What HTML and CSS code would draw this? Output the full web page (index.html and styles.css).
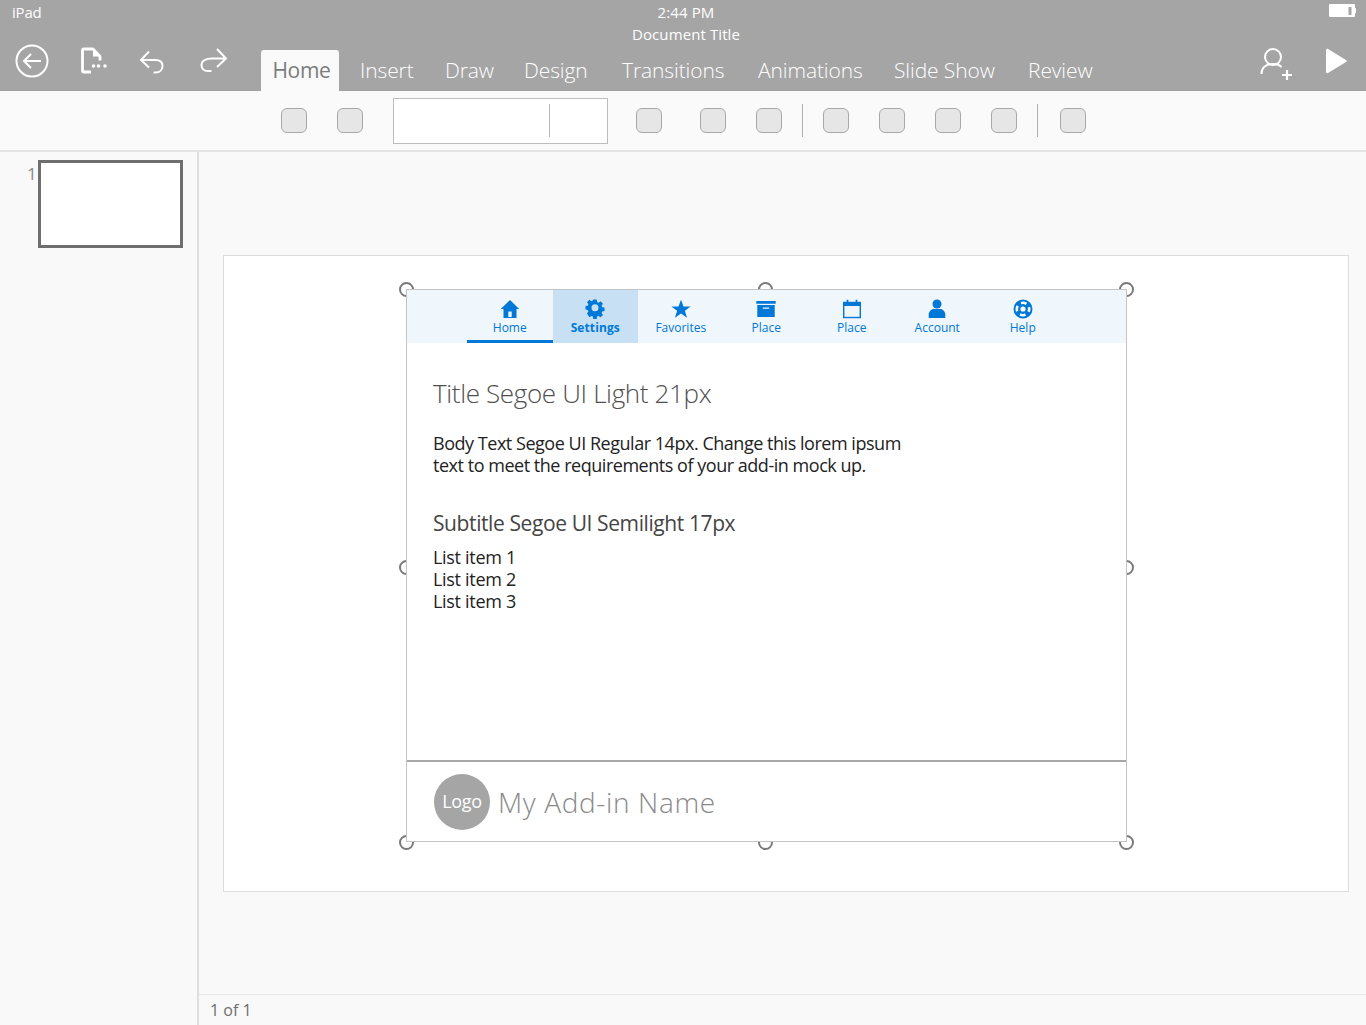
FILE: index.html
```html
<!DOCTYPE html>
<html lang="en">
<head>
<meta charset="utf-8">
<title>Document Title</title>
<link rel="stylesheet" href="styles.css">
</head>
<body>
<header class="appbar">
  <div class="status">
    <span class="status-device">iPad</span>
    <div class="status-center">
      <span>2:44 PM</span>
      <span>Document Title</span>
    </div>
    <svg class="battery" width="28" height="14" viewBox="0 0 28 14"><rect x="1" y="1" width="26" height="13" rx="1" fill="#fff"/><rect x="20.500" y="4" width="3" height="8" fill="#a5a5a5"/><rect x="27" y="5" width="1" height="5" fill="#fff"/></svg>
  </div>
  <div class="commandrow">
    <div class="quick">
      <svg class="q-back" width="34" height="34" viewBox="0 0 34 34" fill="none" stroke="#fff" stroke-width="2"><circle cx="17" cy="17" r="15.500"/><path d="M26 17H9.500M16 10l-7 7 7 7"/></svg>
      <svg class="q-file" width="30" height="28" viewBox="0 0 30 28" fill="none"><path d="M2.500 3.500c0-1 .5-1.500 1.500-1.500h9l7 7.500v4M2.500 3.500v20c0 1 .5 1.500 1.500 1.500h7" stroke="#fff" stroke-width="2.800" stroke-linejoin="round"/><path d="M13 2v7.500h7z" fill="#fff"/><circle cx="13.500" cy="19" r="1.800" fill="#fff"/><circle cx="18.500" cy="19" r="1.800" fill="#fff"/><circle cx="25" cy="19" r="1.800" fill="#fff"/></svg>
      <svg class="q-undo" width="26" height="26" viewBox="0 0 26 26" fill="none" stroke="#fff" stroke-width="2"><path d="M10 2.500L2 11l8 7.500M2 11h14.500c4.500 0 7 2.500 7 6s-2.500 6.500-7 6.500h-2"/></svg>
      <svg class="q-redo" width="28" height="26" viewBox="0 0 28 26" fill="none" stroke="#fff" stroke-width="2"><path d="M17 2l9 9.500L17 20M26 11.500H12C5.500 11.500 1.500 14 1.500 18s3 6 6 6h4"/></svg>
    </div>
    <nav class="ribbon-tabs">
      <a class="ribbon-tab ribbon-tab-active">Home</a>
      <a class="ribbon-tab">Insert</a>
      <a class="ribbon-tab">Draw</a>
      <a class="ribbon-tab">Design</a>
      <a class="ribbon-tab">Transitions</a>
      <a class="ribbon-tab">Animations</a>
      <a class="ribbon-tab">Slide Show</a>
      <a class="ribbon-tab">Review</a>
    </nav>
    <div class="share">
      <svg width="34" height="34" viewBox="0 0 34 34" fill="none" stroke="#fff" stroke-width="2"><circle cx="13" cy="10" r="8"/><path d="M1.500 27c0-6 4-10 11.500-10 3.500 0 6.500 1 8.500 3"/><path d="M27 23v10M22 28h10" stroke-width="2.200"/></svg>
      <svg width="22" height="26" viewBox="0 0 22 26"><path d="M1 2.500C1 1 2 .5 3 1l18 11c1 .6 1 1.400 0 2L3 25c-1 .5-2 0-2-1.500z" fill="#fff"/></svg>
    </div>
  </div>
</header>

<div class="toolbar">
  <span class="tool"></span>
  <span class="tool tool-gap-30"></span>
  <div class="font-box"><span class="font-name"></span><span class="font-size"></span></div>
  <span class="tool tool-gap-28"></span>
  <span class="tool tool-gap-38"></span>
  <span class="tool tool-gap-30"></span>
  <span class="tool-sep tool-sep-a"></span>
  <span class="tool tool-gap-20"></span>
  <span class="tool tool-gap-30"></span>
  <span class="tool tool-gap-30"></span>
  <span class="tool tool-gap-30"></span>
  <span class="tool-sep tool-sep-b"></span>
  <span class="tool tool-gap-22"></span>
</div>

<div class="workspace">
  <aside class="thumbs">
    <span class="thumb-num">1</span>
    <div class="thumb"></div>
  </aside>
  <main class="editor">
    <div class="canvas">
      <section class="slide">
        <div class="addin-frame">
          <span class="handle handle-tl"></span>
          <span class="handle handle-tc"></span>
          <span class="handle handle-tr"></span>
          <span class="handle handle-ml"></span>
          <span class="handle handle-mr"></span>
          <span class="handle handle-bl"></span>
          <span class="handle handle-bc"></span>
          <span class="handle handle-br"></span>
          <div class="addin">
            <nav class="pivot">
              <a class="pivot-item pivot-item-first">
                <svg width="20" height="20" viewBox="0 0 20 20"><path fill="#0078d7" fill-rule="evenodd" d="M10 1 .8 10H3.500v9h13v-9h2.700zM8.300 12.500h3.400V18H8.300z"/></svg>
                <span>Home</span>
              </a>
              <a class="pivot-item pivot-item-active">
                <svg width="20" height="20" viewBox="0 0 20 20"><path fill="#0078d7" fill-rule="evenodd" d="M8.300 .6h3.400l.4 2.500 1.500.6 2-1.400 2.400 2.400-1.400 2 .6 1.500 2.300.4v3.400l-2.300.4-.6 1.500 1.400 2-2.400 2.400-2-1.400-1.500.6-.4 2.400H8.300l-.4-2.400-1.500-.6-2 1.400L2 14.400l1.400-2-.6-1.500-2.300-.4V7.100l2.300-.4.600-1.500-1.400-2 2.400-2.400 2 1.400 1.500-.6zM10 5.300a3.500 3.500 0 1 0 0 7 3.500 3.500 0 0 0 0-7z"/></svg>
                <span>Settings</span>
              </a>
              <a class="pivot-item">
                <svg width="20" height="20" viewBox="0 0 20 20"><path fill="#0078d7" d="M10 .8l2.500 6.700h7.100l-5.700 4.300 2.100 6.900L10 14.500l-6 4.200 2.100-6.900L.4 7.500h7.100z"/></svg>
                <span>Favorites</span>
              </a>
              <a class="pivot-item">
                <svg width="20" height="20" viewBox="0 0 20 20"><path fill="#0078d7" fill-rule="evenodd" d="M.3 2h19.400v2.800H.3zM1.300 6h17.400v12H1.300zM6.800 8.500v1.200h6.400V8.500z"/></svg>
                <span>Place</span>
              </a>
              <a class="pivot-item">
                <svg width="20" height="20" viewBox="0 0 20 20" fill="none" stroke="#0078d7" stroke-width="1.400"><rect x="1.700" y="3.500" width="16.600" height="15"/><path d="M1.700 5.500h16.600" stroke-width="3"/><path d="M5.500 .8v3.500M14.500 .8v3.500" stroke-width="1.700"/></svg>
                <span>Place</span>
              </a>
              <a class="pivot-item">
                <svg width="20" height="20" viewBox="0 0 20 20"><circle cx="10" cy="5" r="4.500" fill="#0078d7"/><path fill="#0078d7" d="M1.700 19v-3.500c0-3 2.500-5.500 5-5.500h6.600c2.500 0 5 2.500 5 5.500V19z"/></svg>
                <span>Account</span>
              </a>
              <a class="pivot-item">
                <svg width="20" height="20" viewBox="0 0 20 20" fill="none"><circle cx="10" cy="10" r="9.500" fill="#0078d7"/><circle cx="10" cy="10" r="2.600" fill="#fff"/><circle cx="10" cy="10" r="6.200" stroke="#fff" stroke-width="2.600" stroke-dasharray="5.700 4.040" stroke-dashoffset="2.850"/></svg>
                <span>Help</span>
              </a>
            </nav>
            <div class="addin-body">
              <h1 class="addin-title">Title Segoe UI Light 21px</h1>
              <p class="addin-text">Body Text Segoe UI Regular 14px. Change this lorem ipsum<br>text to meet the requirements of your add-in mock up.</p>
              <h2 class="addin-subtitle">Subtitle Segoe UI Semilight 17px</h2>
              <ul class="addin-list">
                <li>List item 1</li>
                <li>List item 2</li>
                <li>List item 3</li>
              </ul>
            </div>
            <footer class="addin-footer">
              <span class="logo">Logo</span>
              <span class="addin-name">My Add-in Name</span>
            </footer>
          </div>
        </div>
      </section>
    </div>
    <div class="statusbar">1 of 1</div>
  </main>
</div>
</body>
</html>
```

FILE: styles.css
```css
* { box-sizing: border-box; }
html, body { margin: 0; height: 100%; }
body {
  width: 1366px;
  height: 1025px;
  overflow: hidden;
  display: flex;
  flex-direction: column;
  background: #f9f9f9;
  font-family: "Open Sans", "Noto Sans", sans-serif;
  color: #333;
}

/* app bar */
.appbar {
  height: 91px;
  flex: none;
  background: #a5a5a5;
  border-bottom: 1px solid #a0a0a0;
  color: #fff;
  display: flex;
  flex-direction: column;
}
.status {
  position: relative;
  height: 50px;
  flex: none;
  padding: 3px 4px 0 12px;
  display: flex;
  justify-content: space-between;
  align-items: flex-start;
  font-size: 15px;
  line-height: 18px;
}
.status-device { letter-spacing: -.2px; }
.status-center {
  position: absolute;
  left: 6px;
  right: 0;
  top: 3px;
  display: flex;
  flex-direction: column;
  align-items: center;
  gap: 4px;
  letter-spacing: .1px;
}
.battery { margin-top: 0; margin-right: 6px; }
.commandrow { flex: 1; display: flex; position: relative; }
.quick { width: 261px; flex: none; display: flex; align-items: flex-start; }
.q-back { margin: -6px 0 0 15px; }
.q-file { margin: -3px 0 0 31px; }
.q-undo { margin: -1px 0 0 29px; }
.q-redo { margin: -3px 0 0 35px; }
.ribbon-tabs {
  display: grid;
  grid-template-columns: 78px 106px 79px 98px 136px 136px 134px auto;
  font-size: 21px;
  line-height: 40px;
  font-weight: 300;
}
.ribbon-tab { letter-spacing: -.1px; }
.ribbon-tab:nth-child(2) { margin-left: 21px; }
.ribbon-tab-active {
  background: #fafafa;
  color: #7b7b7b;
  border-radius: 3px 3px 0 0;
  text-align: center;
  font-weight: 400;
  padding-left: 3px;
  margin-bottom: -1px;
  letter-spacing: -.3px;
}
.share { margin-left: auto; display: flex; align-items: flex-start; padding-right: 19px; }
.share svg:first-child { margin-top: -3px; }
.share svg:last-child { margin: -2px 0 0 31px; }

/* toolbar */
.toolbar {
  height: 61px;
  flex: none;
  background: #fafafa;
  border-bottom: 2px solid #e4e4e4;
  padding-left: 281px;
  display: flex;
  align-items: center;
}
.tool {
  width: 26px;
  height: 25px;
  flex: none;
  background: #e6e6e6;
  border: 1px solid #a8a8a8;
  border-radius: 6px;
}
.tool-gap-20 { margin-left: 20px; }
.tool-gap-22 { margin-left: 22px; }
.tool-gap-28 { margin-left: 28px; }
.tool-gap-30 { margin-left: 30px; }
.tool-gap-38 { margin-left: 38px; }
.tool-sep { width: 1px; height: 33px; background: #b0b0b0; flex: none; }
.tool-sep-a { margin-left: 20px; }
.tool-sep-b { margin-left: 20px; }
.font-box {
  width: 215px;
  height: 46px;
  margin-left: 30px;
  background: #fff;
  border: 1px solid #bdbdbd;
  display: flex;
  align-items: center;
}
.font-name { width: 156px; height: 33px; border-right: 1px solid #b8b8b8; }

/* workspace */
.workspace { flex: 1; display: flex; min-height: 0; }
.thumbs {
  width: 199px;
  flex: none;
  border-right: 2px solid #dedede;
  padding: 8px 0 0 27px;
  display: flex;
  align-items: flex-start;
}
.thumb-num { width: 10px; font-size: 17px; line-height: 18px; color: #8a8a8a; margin-top: 5px; }
.thumb {
  width: 145px;
  height: 88px;
  background: #fff;
  border: 3px solid #6e6e6e;
  margin-left: 1px;
}
.editor { flex: 1; min-width: 0; display: flex; flex-direction: column; }
.canvas { flex: 1; padding: 103px 17px 0 24px; }
.slide {
  height: 637px;
  background: #fff;
  border: 1px solid #dcdcdc;
  padding: 33px 0 0 182px;
}
.addin-frame { position: relative; width: 721px; height: 553px; }
.handle {
  position: absolute;
  width: 15px;
  height: 15px;
  border: 2px solid #7a7a7a;
  border-radius: 50%;
  background: #fff;
}
.handle-tl { left: -7px; top: -7px; }
.handle-tc { left: 352px; top: -7px; }
.handle-tr { right: -7px; top: -7px; }
.handle-ml { left: -7px; top: 271px; }
.handle-mr { right: -7px; top: 271px; }
.handle-bl { left: -7px; bottom: -8px; }
.handle-bc { left: 352px; bottom: -8px; }
.handle-br { right: -7px; bottom: -8px; }
.addin {
  position: relative;
  width: 100%;
  height: 100%;
  background: #fff;
  border: 1px solid #c4c4c4;
  display: flex;
  flex-direction: column;
}
.pivot {
  height: 53px;
  flex: none;
  background: #eff6fc;
  display: flex;
  padding-left: 60px;
  color: #0078d7;
}
.pivot-item {
  width: 85.500px;
  height: 53px;
  flex: none;
  display: flex;
  flex-direction: column;
  align-items: center;
  padding-top: 9px;
  font-size: 12px;
  line-height: 16px;
  letter-spacing: 0;
}
.pivot-item svg { flex: none; display: block; }
.pivot-item span { margin-top: 1px; }
.pivot-item-first { border-bottom: 3px solid #0078d7; }
.pivot-item-active { background: #c7e0f4; font-weight: 700; letter-spacing: .1px; }
.addin-body { flex: 1; padding: 0 26px; }
.addin-title {
  margin: 30px 0 0;
  font-size: 26px;
  line-height: 40px;
  font-weight: 300;
  color: #505050;
  letter-spacing: -.35px;
}
.addin-text {
  margin: 19px 0 0;
  font-size: 18px;
  line-height: 22px;
  color: #222;
  letter-spacing: -.47px;
}
.addin-subtitle {
  margin: 31px 0 0;
  font-size: 21px;
  line-height: 32px;
  font-weight: 400;
  color: #444;
  letter-spacing: -.4px;
}
.addin-list {
  list-style: none;
  margin: 7px 0 0;
  padding: 0;
  font-size: 18px;
  line-height: 22px;
  color: #222;
  letter-spacing: -.3px;
}
.addin-footer {
  height: 81px;
  flex: none;
  border-top: 2px solid #a8a8a8;
  padding: 12px 0 0 27px;
  display: flex;
  align-items: flex-start;
}
.logo {
  width: 56px;
  height: 56px;
  border-radius: 50%;
  background: #a5a5a5;
  color: #fff;
  font-size: 18px;
  line-height: 54px;
  letter-spacing: -.3px;
  display: flex;
  align-items: flex-start;
  justify-content: center;
}
.addin-name {
  margin: 6px 0 0 8px;
  font-size: 28px;
  line-height: 44px;
  font-weight: 300;
  color: #8a8a8a;
  letter-spacing: .65px;
}
.statusbar {
  height: 31px;
  flex: none;
  background: #f9f9f9;
  border-top: 1px solid #e8e8e8;
  padding: 5px 0 0 11px;
  font-size: 16px;
  line-height: 20px;
  color: #6e6e6e;
}
```
